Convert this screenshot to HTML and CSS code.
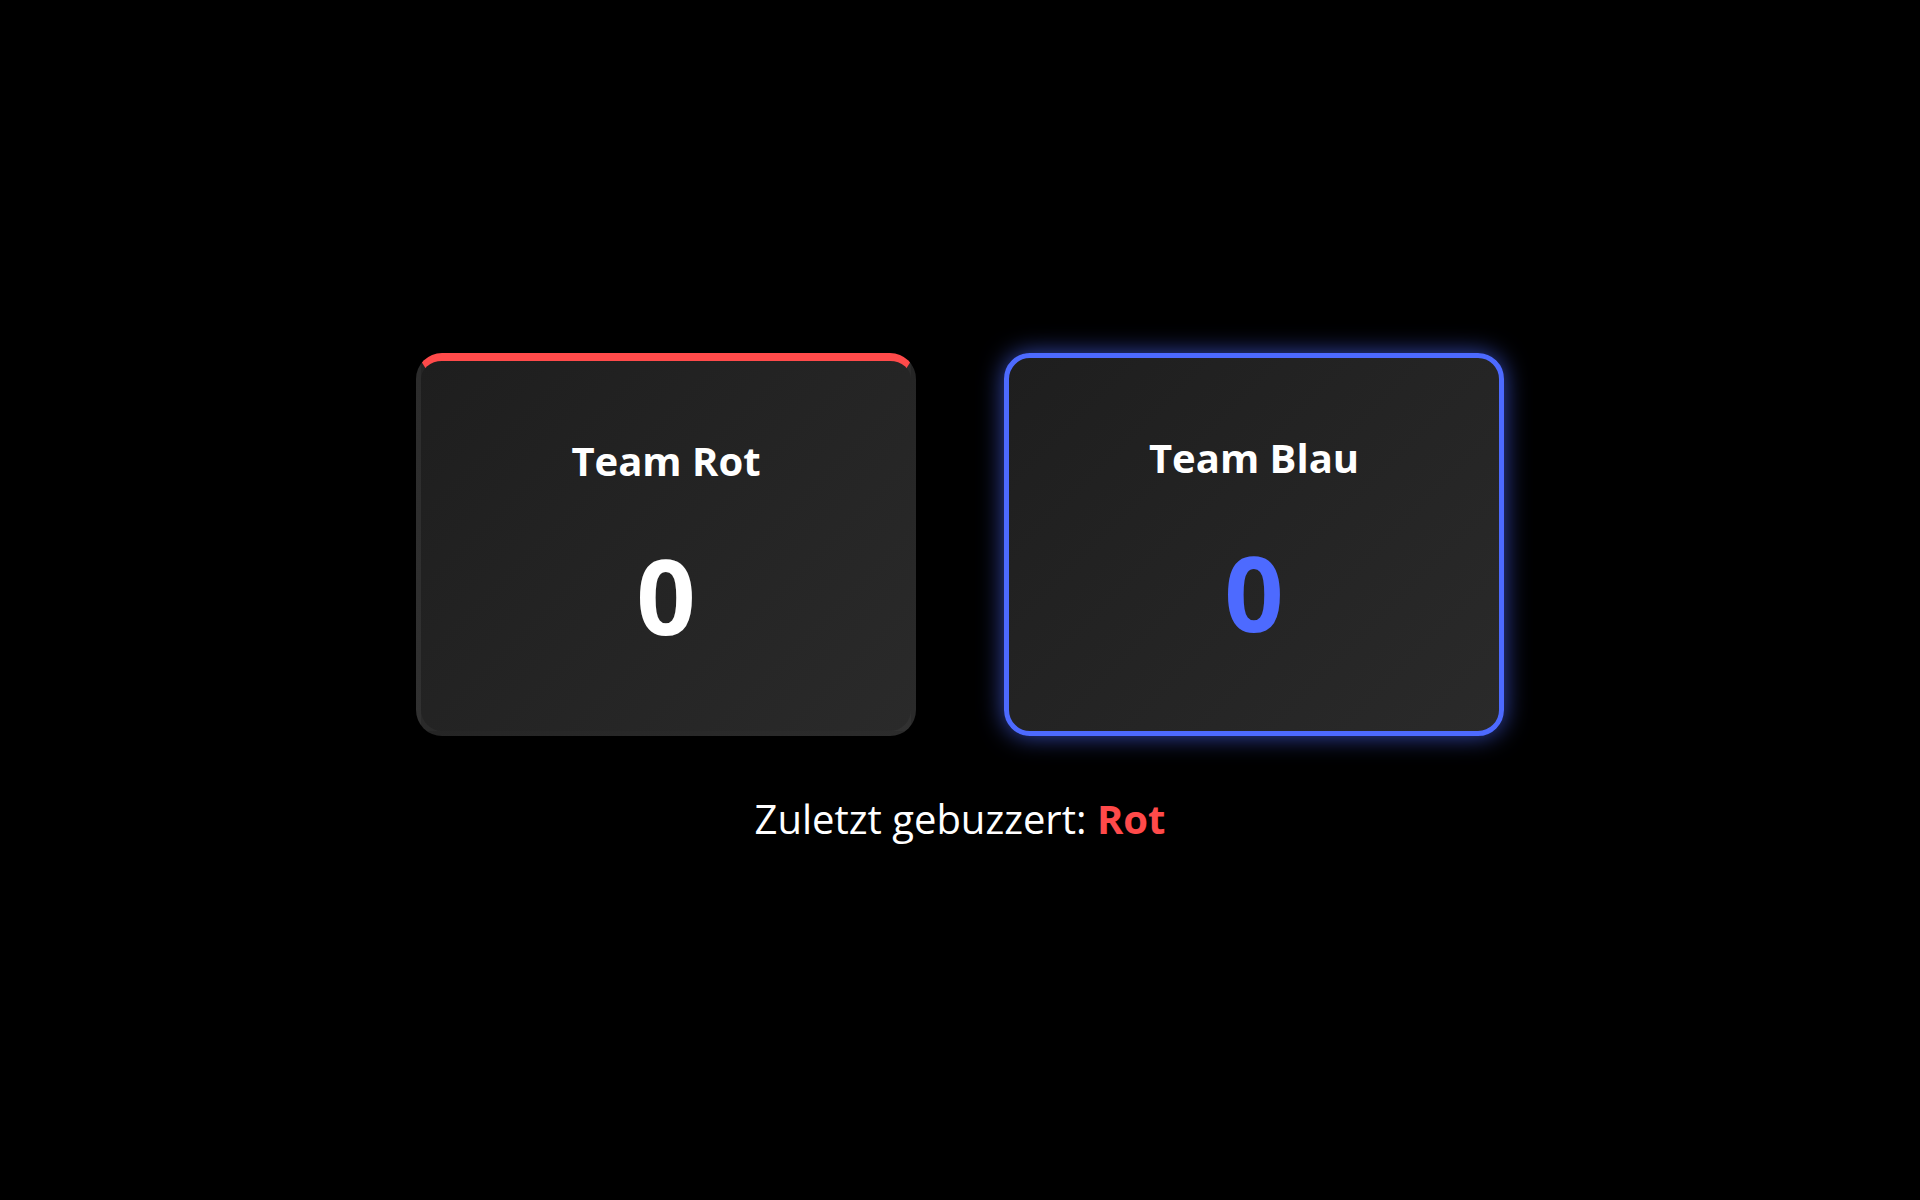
FILE: index.html
```html
<!DOCTYPE html>
<html lang="de">
<head>
<meta charset="utf-8">
<title>Buzzer</title>
<link rel="stylesheet" href="styles.css">
</head>
<body>
<main class="board">
  <div class="teams">
    <section class="card card-red">
      <h2 class="team-name">Team Rot</h2>
      <div class="score">0</div>
    </section>
    <section class="card card-blue active">
      <h2 class="team-name">Team Blau</h2>
      <div class="score score-blue">0</div>
    </section>
  </div>
  <p class="last">Zuletzt gebuzzert: <strong class="last-team">Rot</strong></p>
</main>
</body>
</html>
```
FILE: styles.css
```css
html, body {
  margin: 0;
  padding: 0;
  background: #000;
}
body {
  font-family: "Segoe UI", "Open Sans", "Noto Sans", sans-serif;
  color: #fff;
}
.board {
  min-height: 100vh;
  display: flex;
  flex-direction: column;
  align-items: center;
  justify-content: center;
  padding-bottom: 4px;
  box-sizing: border-box;
}
.teams {
  display: flex;
  gap: 88px;
}
.card {
  width: 500px;
  height: 383px;
  box-sizing: border-box;
  padding-top: 76px;
  border-radius: 26px;
  border: 5px solid rgba(255, 255, 255, 0.035);
  background: linear-gradient(135deg, #1e1e1e 0%, #2a2a2a 100%);
  display: flex;
  flex-direction: column;
  align-items: center;
}
.card-red {
  border-top: 8px solid #ff4a4a;
}
.card-blue.active {
  border-color: #4d6aff;
  box-shadow: 0 0 24px rgba(77, 106, 255, 0.7);
}
.team-name {
  margin: 0;
  font-size: 40px;
  line-height: 48px;
  font-weight: 700;
}
.score {
  margin-top: 58px;
  font-size: 104px;
  line-height: 104px;
  font-weight: 700;
}
.score-blue {
  color: #4d6aff;
}
.last {
  margin: 59px 0 0;
  font-size: 40px;
  line-height: 48px;
  font-weight: 400;
}
.last-team {
  color: #ff4a4a;
  font-weight: 700;
}
```
